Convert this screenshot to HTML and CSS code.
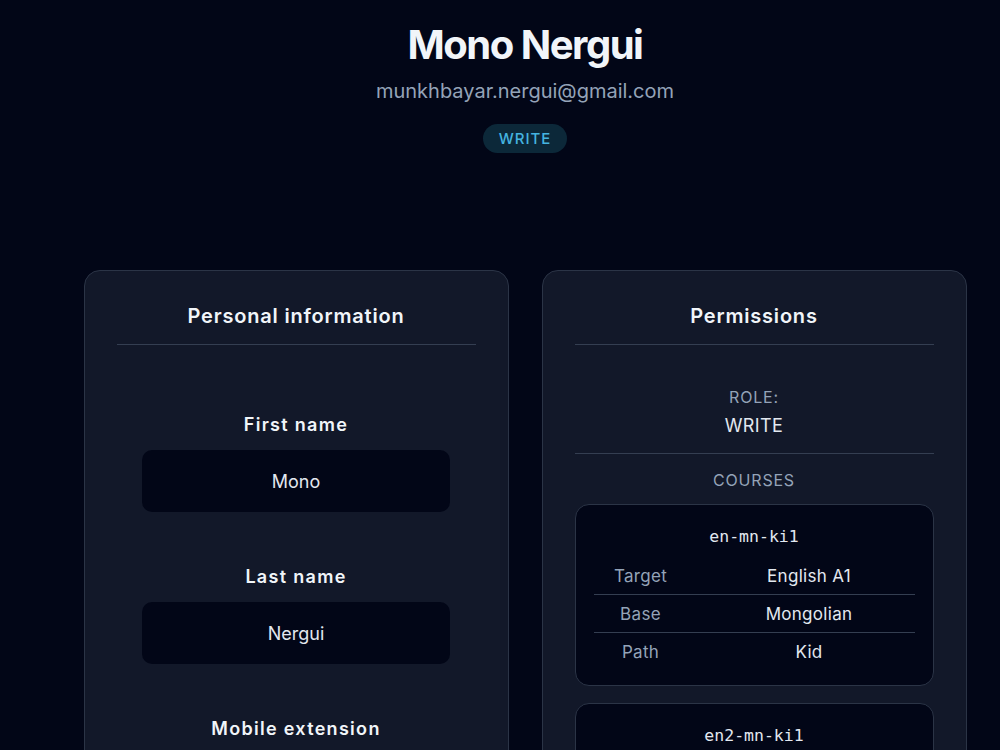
FILE: index.html
```html
<!DOCTYPE html>
<html lang="en">
<head>
    <meta charset="UTF-8">
    <meta name="viewport" content="width=device-width, initial-scale=1.0">
    <title>Mono Nergui</title>
    <link rel="stylesheet" href="styles.css">
</head>
<body>
    <main class="profile-page">
        <header class="profile-header">
            <h1 class="profile-name">Mono Nergui</h1>
            <p class="profile-email">munkhbayar.nergui@gmail.com</p>
            <span class="role-badge">WRITE</span>
        </header>

        <div class="profile-grid">
            <section class="panel">
                <h2 class="panel-title">Personal information</h2>
                <div class="form-fields">
                    <div class="field">
                        <label class="field-label" for="first-name">First name</label>
                        <input class="field-input" id="first-name" type="text" value="Mono">
                    </div>
                    <div class="field">
                        <label class="field-label" for="last-name">Last name</label>
                        <input class="field-input" id="last-name" type="text" value="Nergui">
                    </div>
                    <div class="field">
                        <label class="field-label" for="mobile-ext">Mobile extension</label>
                        <input class="field-input" id="mobile-ext" type="text" value="">
                    </div>
                </div>
            </section>

            <section class="panel">
                <h2 class="panel-title">Permissions</h2>
                <div class="role-block">
                    <div class="small-caption">ROLE:</div>
                    <div class="role-value">WRITE</div>
                </div>
                <div class="small-caption courses-caption">COURSES</div>

                <div class="course-list">
                    <div class="course-card">
                        <div class="course-code">en-mn-ki1</div>
                        <div class="course-table">
                            <div class="course-row">
                                <span class="course-key">Target</span>
                                <span class="course-val">English A1</span>
                            </div>
                            <div class="course-row">
                                <span class="course-key">Base</span>
                                <span class="course-val">Mongolian</span>
                            </div>
                            <div class="course-row">
                                <span class="course-key">Path</span>
                                <span class="course-val">Kid</span>
                            </div>
                        </div>
                    </div>
                    <div class="course-card">
                        <div class="course-code">en2-mn-ki1</div>
                        <div class="course-table">
                            <div class="course-row">
                                <span class="course-key">Target</span>
                                <span class="course-val">English A2</span>
                            </div>
                            <div class="course-row">
                                <span class="course-key">Base</span>
                                <span class="course-val">Mongolian</span>
                            </div>
                            <div class="course-row">
                                <span class="course-key">Path</span>
                                <span class="course-val">Kid</span>
                            </div>
                        </div>
                    </div>
                </div>
            </section>
        </div>
    </main>
</body>
</html>
```

FILE: styles.css
```css
body {
    margin: 0;
    background-color: #020617;
    color: #f1f5f9;
    font-family: Inter, "Noto Sans", sans-serif;
}

.profile-page {
    padding: 21px 0 40px 50px;
}

.profile-header {
    display: flex;
    flex-direction: column;
    align-items: center;
}

.profile-name {
    margin: 0;
    font-size: 40px;
    line-height: 48px;
    font-weight: 700;
    letter-spacing: -1.5px;
    color: #f1f5f9;
}

.profile-email {
    margin: 8px 0 0;
    font-size: 20px;
    line-height: 28px;
    color: #94a3b8;
}

.role-badge {
    margin-top: 19px;
    padding: 4px 16px;
    line-height: 21px;
    font-size: 15px;
    font-weight: 500;
    letter-spacing: 1px;
    color: #45b4e0;
    background-color: #0c2839;
    border-radius: 999px;
}

.profile-grid {
    display: grid;
    grid-template-columns: 425px 425px;
    justify-content: center;
    gap: 33px;
    margin-top: 117px;
}

.panel {
    background-color: #121829;
    border: 1px solid #2b3446;
    border-radius: 16px;
    padding: 31px 32px 32px;
    box-sizing: border-box;
}

.panel-title {
    margin: 0;
    padding-bottom: 14px;
    border-bottom: 1px solid #343e51;
    text-align: center;
    font-size: 20px;
    line-height: 28px;
    font-weight: 600;
    letter-spacing: 0.8px;
    color: #f1f5f9;
}

.form-fields {
    padding-top: 66px;
    display: flex;
    flex-direction: column;
    align-items: center;
    gap: 51px;
}

.field {
    display: flex;
    flex-direction: column;
    align-items: center;
    width: 308px;
}

.field-label {
    font-size: 18px;
    line-height: 28px;
    font-weight: 600;
    letter-spacing: 1.3px;
    margin-bottom: 11px;
}

.field-input {
    width: 100%;
    height: 62px;
    box-sizing: border-box;
    border: none;
    border-radius: 10px;
    background-color: #020617;
    color: #e2e8f0;
    font-family: inherit;
    font-size: 18px;
    text-align: center;
    outline: none;
}

.role-block {
    padding: 40px 0 13px;
    border-bottom: 1px solid #343e51;
    text-align: center;
}

.small-caption {
    font-size: 16px;
    line-height: 24px;
    letter-spacing: 0.8px;
    color: #94a3b8;
    text-align: center;
}

.role-value {
    margin-top: 3px;
    font-size: 18px;
    line-height: 28px;
    letter-spacing: 0.4px;
    color: #e2e8f0;
}

.courses-caption {
    margin-top: 14px;
}

.course-list {
    display: flex;
    flex-direction: column;
    gap: 17px;
    margin-top: 12px;
}

.course-card {
    background-color: #020617;
    border: 1px solid #2b3446;
    border-radius: 14px;
    padding: 20px 18px 14px;
}

.course-code {
    text-align: center;
    font-family: "DejaVu Sans Mono", "Liberation Mono", monospace;
    font-size: 16.5px;
    line-height: 24px;
    color: #e2e8f0;
}

.course-table {
    margin-top: 8px;
}

.course-row {
    display: grid;
    grid-template-columns: 94px 1fr;
    height: 38px;
    align-items: center;
    border-bottom: 1px solid #343e51;
    box-sizing: border-box;
    font-size: 17px;
}

.course-row:last-child {
    border-bottom: none;
}

.course-key {
    text-align: center;
    color: #94a3b8;
    letter-spacing: 0.3px;
}

.course-val {
    text-align: center;
    padding-left: 16px;
    color: #e2e8f0;
    letter-spacing: 0.3px;
}
```
